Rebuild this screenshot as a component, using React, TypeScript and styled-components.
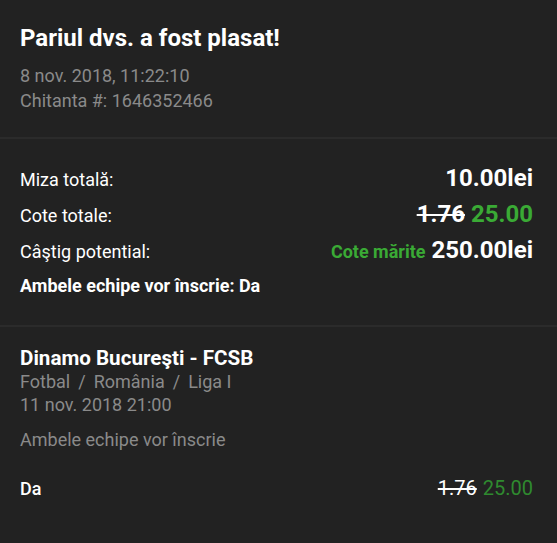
import React from 'react';
import styled, { createGlobalStyle } from 'styled-components';

const GlobalStyle = createGlobalStyle`
  html, body {
    margin: 0;
    padding: 0;
    background: #222222;
  }
  body {
    font-family: Roboto, "Liberation Sans", sans-serif;
    color: #fff;
  }
`;

const Receipt = styled.div`
  width: 557px;
  min-height: 543px;
  background: #222222;
`;

const Section = styled.section<{ pad: string; last?: boolean }>`
  padding: ${(p) => p.pad};
  border-bottom: ${(p) => (p.last ? 'none' : '2px solid #2b2b2b')};
`;

const Title = styled.h1`
  margin: 0 0 11px;
  font-size: 24px;
  font-weight: 700;
  line-height: 28px;
`;

const Meta = styled.div<{ tight?: boolean }>`
  color: #8a8a8a;
  font-size: 18px;
  line-height: ${(p) => (p.tight ? '23px' : '25px')};
`;

const Slash = styled.span`
  margin: 0 8px;
`;

const Row = styled.div`
  display: flex;
  justify-content: space-between;
  align-items: baseline;
  line-height: 36px;
  height: 36px;
`;

const Label = styled.span<{ bold?: boolean }>`
  font-size: 18px;
  font-weight: ${(p) => (p.bold ? 700 : 400)};
`;

const Value = styled.span`
  font-size: 24px;
  font-weight: 700;
  display: flex;
  align-items: baseline;
  gap: 6px;
`;

const Old = styled.s`
  color: #fff;
  text-decoration-thickness: 2px;
`;

const Boost = styled.span<{ small?: boolean; dim?: boolean }>`
  color: ${(p) => (p.dim ? '#2f8a2f' : '#3aaa35')};
  font-size: ${(p) => (p.small ? '18px' : 'inherit')};
`;

const Match = styled.div`
  font-size: 20.6px;
  font-weight: 700;
  line-height: 24px;
`;

const Market = styled.div`
  color: #8a8a8a;
  font-size: 18px;
  line-height: 23px;
  margin-top: 12px;
`;

const Selection = styled.div`
  display: flex;
  justify-content: space-between;
  align-items: baseline;
  line-height: 24px;
  margin-top: 25px;
`;

const SelLabel = styled.span`
  font-size: 18px;
  font-weight: 500;
`;

const SelValue = styled.span`
  font-size: 20px;
  display: flex;
  gap: 6px;
`;

export default function App() {
  return (
    <Receipt>
      <GlobalStyle />
      <Section pad="24px 20px 24px">
        <Title>Pariul dvs. a fost plasat!</Title>
        <Meta>8 nov. 2018, 11:22:10</Meta>
        <Meta>Chitanta #: 1646352466</Meta>
      </Section>
      <Section pad="21px 24px 21px 20px">
        <Row>
          <Label>Miza totală:</Label>
          <Value>10.00lei</Value>
        </Row>
        <Row>
          <Label>Cote totale:</Label>
          <Value>
            <Old>1.76</Old>
            <Boost>25.00</Boost>
          </Value>
        </Row>
        <Row>
          <Label>Câştig potential:</Label>
          <Value>
            <Boost small>Cote mărite</Boost>
            250.00lei
          </Value>
        </Row>
        <Row>
          <Label bold>Ambele echipe vor înscrie: Da</Label>
        </Row>
      </Section>
      <Section pad="19px 24px 20px 20px" last>
        <Match>Dinamo Bucureşti - FCSB</Match>
        <Meta tight>
          Fotbal<Slash>/</Slash>România<Slash>/</Slash>Liga I
        </Meta>
        <Meta tight>11 nov. 2018 21:00</Meta>
        <Market>Ambele echipe vor înscrie</Market>
        <Selection>
          <SelLabel>Da</SelLabel>
          <SelValue>
            <Old>1.76</Old>
            <Boost dim>25.00</Boost>
          </SelValue>
        </Selection>
      </Section>
    </Receipt>
  );
}
